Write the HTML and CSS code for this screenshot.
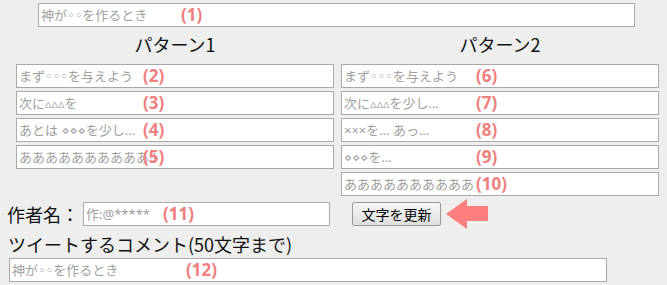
FILE: index.html
```html
<!DOCTYPE html>
<html lang="ja">
<head>
    <meta charset="UTF-8">
    <title>神が◦◦を作るとき</title>
    <link rel="stylesheet" href="styles.css">
</head>
<body>
    <div class="field title-field">
        <input class="txt title-input" type="text" placeholder="神が◦◦を作るとき">
        <span class="num n-title">(1)</span>
    </div>

    <div class="patterns">
        <div class="col">
            <h2>パターン1</h2>
            <div class="field"><input class="txt" type="text" placeholder="まず◦◦◦を与えよう"><span class="num n-left">(2)</span></div>
            <div class="field"><input class="txt" type="text" placeholder="次に▵▵▵を"><span class="num n-left">(3)</span></div>
            <div class="field"><input class="txt" type="text" placeholder="あとは ⋄⋄⋄を少し…"><span class="num n-left">(4)</span></div>
            <div class="field"><input class="txt" type="text" placeholder="ああああああああああ!!"><span class="num n-left">(5)</span></div>
        </div>
        <div class="col">
            <h2>パターン2</h2>
            <div class="field"><input class="txt" type="text" placeholder="まず◦◦◦を与えよう"><span class="num n-right">(6)</span></div>
            <div class="field"><input class="txt" type="text" placeholder="次に▵▵▵を少し…"><span class="num n-right">(7)</span></div>
            <div class="field"><input class="txt" type="text" placeholder="×××を… あっ…"><span class="num n-right">(8)</span></div>
            <div class="field"><input class="txt" type="text" placeholder="⋄⋄⋄を…"><span class="num n-right">(9)</span></div>
            <div class="field"><input class="txt" type="text" placeholder="ああああああああああ"><span class="num n-right">(10)</span></div>
        </div>
    </div>

    <div class="author-row">
        <label class="big-label">作者名：</label>
        <div class="field">
            <input class="txt author-input" type="text" placeholder="作:@*****">
            <span class="num n-author">(11)</span>
        </div>
        <button class="update-btn">文字を更新</button>
        <svg class="arrow" width="42" height="30" viewBox="0 0 42 30">
            <polygon points="0,15 21,0 21,7 42,7 42,22 21,22 21,30" fill="#ff7f7f"/>
        </svg>
    </div>

    <div class="big-label comment-label">ツイートするコメント(50文字まで)</div>
    <div class="field comment-field">
        <input class="txt comment-input" type="text" placeholder="神が◦◦を作るとき">
        <span class="num n-comment">(12)</span>
    </div>
</body>
</html>
```

FILE: styles.css
```css
body {
    margin: 0;
    padding: 3px 0 0 0;
    background: #eeeeee;
    font-family: "Noto Sans CJK JP", "Noto Sans", sans-serif;
    color: #111;
}
.field {
    position: relative;
}
.txt {
    display: block;
    box-sizing: border-box;
    height: 24px;
    margin: 0;
    padding: 0 2px;
    border: 1px solid #a9a9a9;
    background: white;
    font-family: "Noto Sans", "DejaVu Sans", "Noto Sans CJK JP", sans-serif;
    font-size: 13px;
    outline: none;
}
.txt::placeholder {
    color: #a0a0a0;
}
.num {
    position: absolute;
    top: 2px;
    color: #f08080;
    font-family: "Open Sans", "Noto Sans", sans-serif;
    font-weight: bold;
    font-size: 17px;
    line-height: 20px;
    pointer-events: none;
}
.title-field {
    margin-left: 38px;
    width: 597px;
}
.title-input { width: 597px; }
.n-title { left: 143px; }

.patterns {
    display: grid;
    grid-template-columns: 318px 318px;
    column-gap: 7px;
    padding-left: 16px;
}
.col {
    display: flex;
    flex-direction: column;
    gap: 3px;
}
.col .txt { width: 318px; }
h2 {
    margin: 0;
    height: 34px;
    line-height: 34px;
    text-align: center;
    font-weight: normal;
    font-size: 18px;
}
.n-left { left: 127px; }
.n-right { left: 135px; }

.author-row {
    display: flex;
    align-items: center;
    margin-top: 6px;
    padding-left: 7px;
    height: 24px;
}
.big-label {
    font-size: 18px;
    line-height: 24px;
}
.author-row .big-label {
    width: 76px;
}
.author-input { width: 247px; }
.n-author { left: 80px; }
.update-btn {
    margin-left: 22px;
    width: 89px;
    height: 24px;
    padding: 0;
    border: 1px solid #9a9a9a;
    border-radius: 2px;
    background: linear-gradient(#f7f7f7, #dedede);
    font-family: "Noto Sans CJK JP", sans-serif;
    font-size: 14px;
    color: #000;
}
.arrow {
    margin-left: 5px;
}
.comment-label {
    padding-left: 8px;
    margin-top: 4px;
    height: 28px;
    line-height: 28px;
}
.comment-field {
    margin-left: 9px;
    width: 598px;
}
.comment-input { width: 598px; }
.n-comment { left: 177px; }
```
